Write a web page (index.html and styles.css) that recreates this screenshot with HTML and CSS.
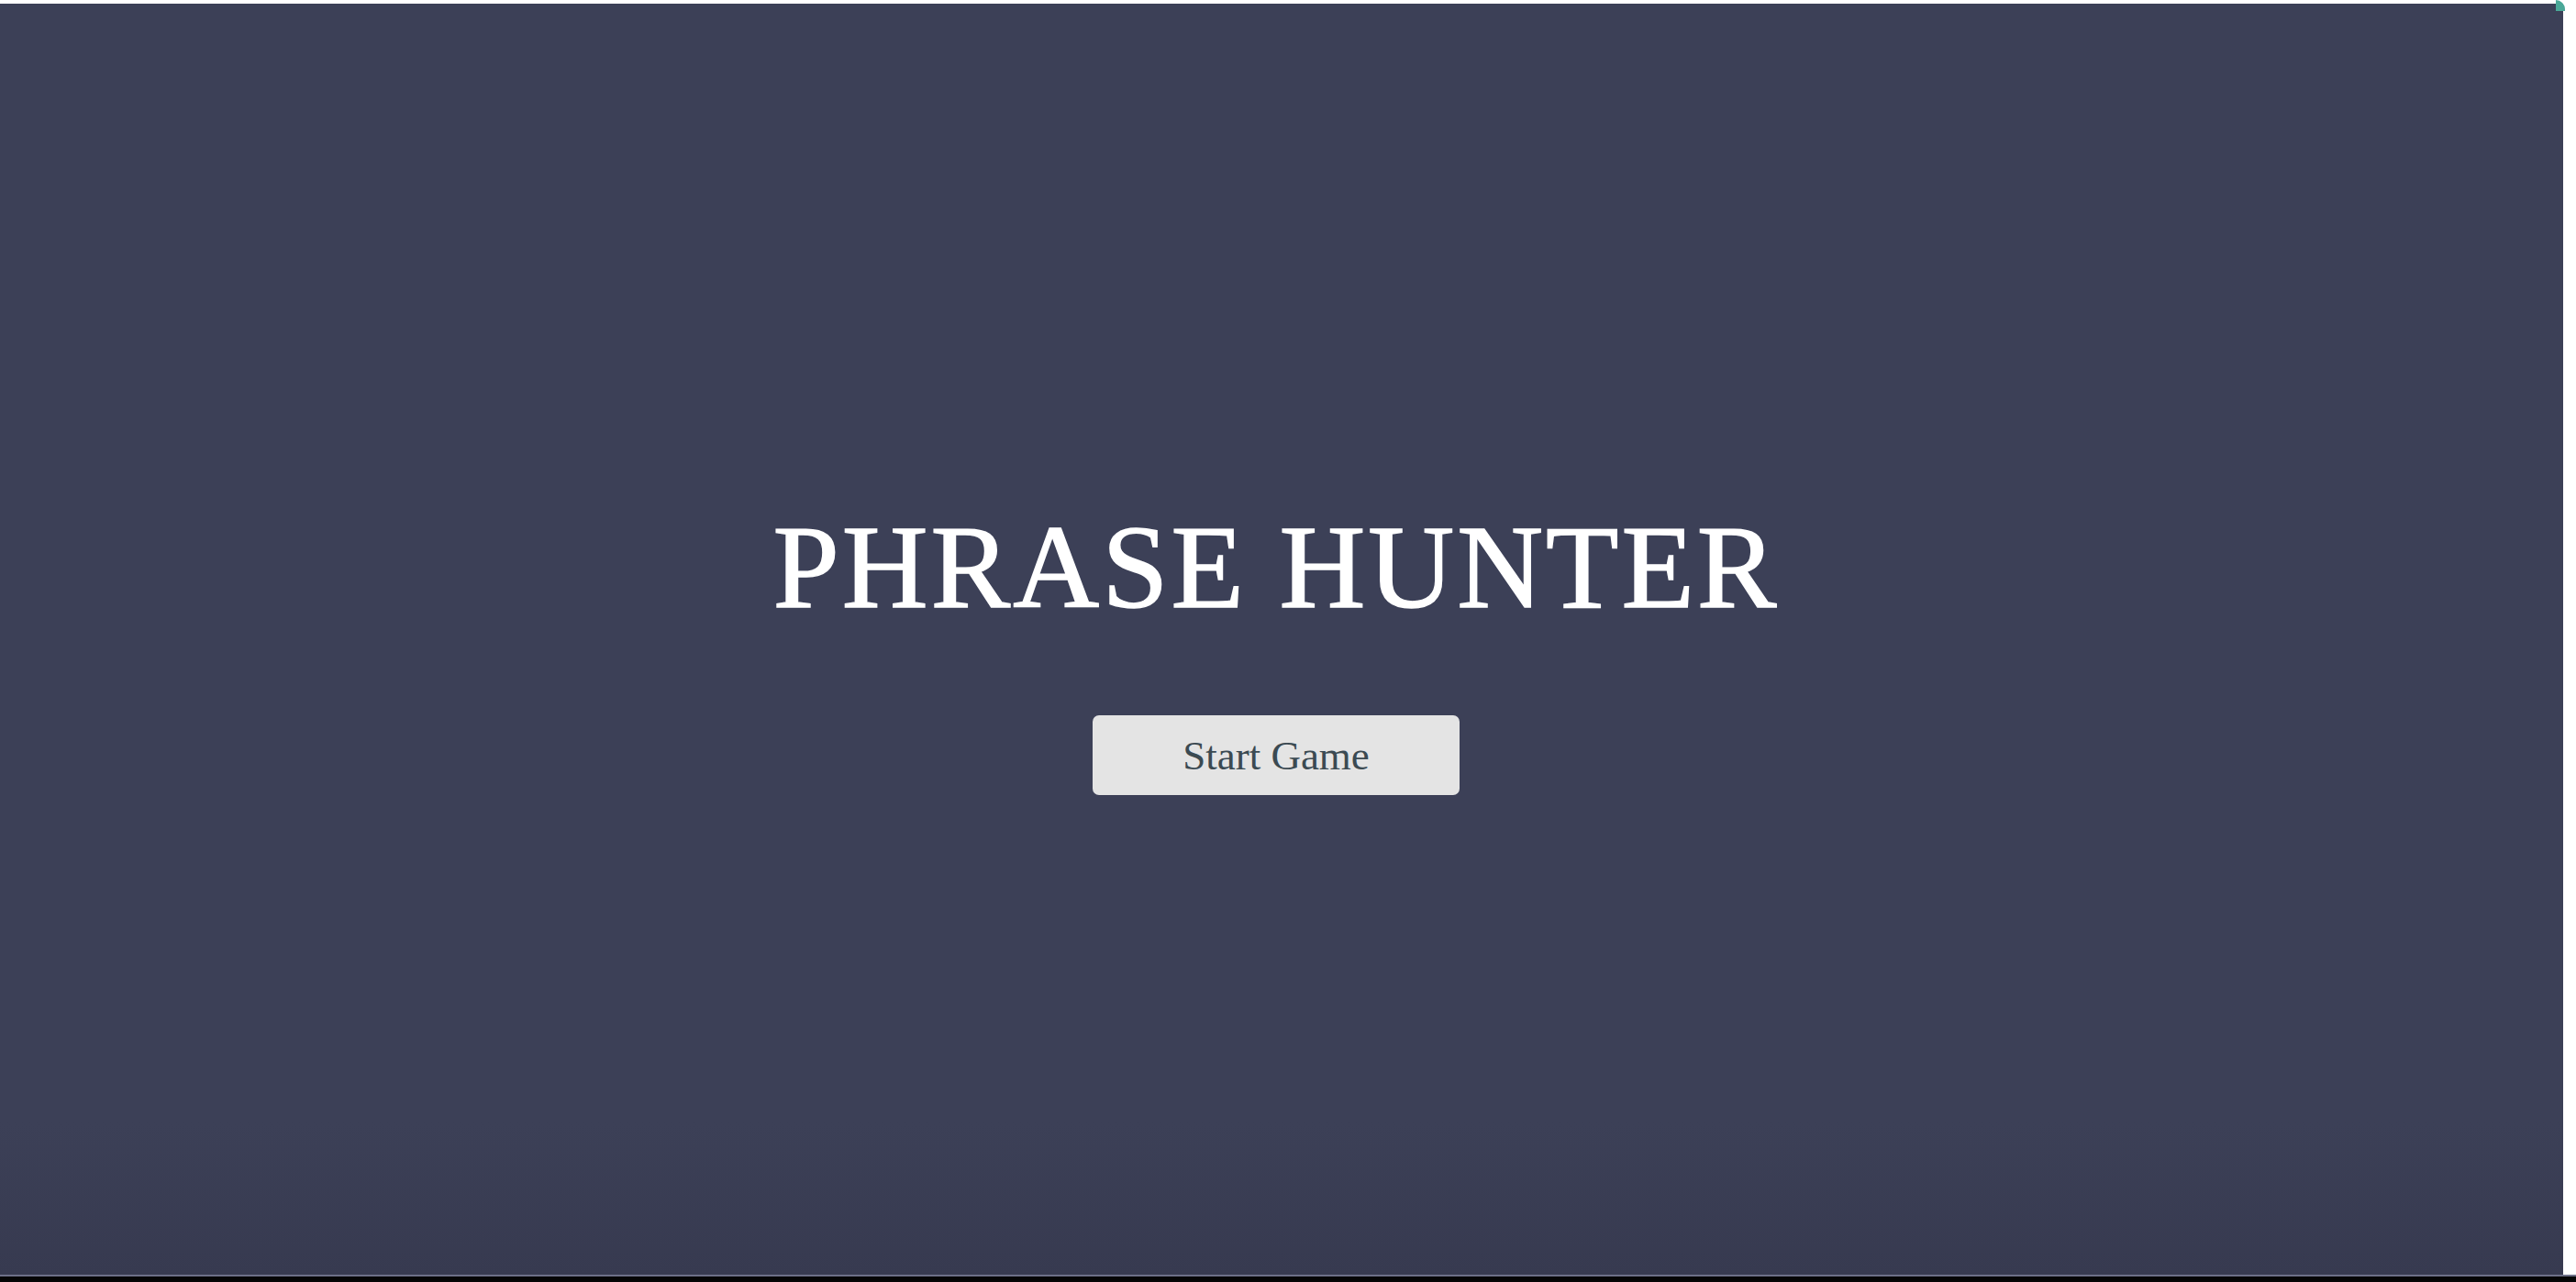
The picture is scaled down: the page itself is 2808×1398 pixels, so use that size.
FILE: index.html
```html
<!DOCTYPE html>
<html lang="en">
<head>
<meta charset="utf-8">
<title>Phrase Hunter</title>
<link rel="stylesheet" href="styles.css">
</head>
<body>
<div class="window">
  <div class="topbar"></div>
  <div class="row">
    <main class="overlay">
      <h1 class="title">PHRASE HUNTER</h1>
      <button class="start" type="button">Start Game</button>
    </main>
    <div class="edge"><span class="corner"></span></div>
  </div>
  <div class="bottomline"></div>
  <div class="bottombar"></div>
</div>
</body>
</html>
```
FILE: styles.css
```css
html, body {
  margin: 0;
  padding: 0;
  height: 100%;
  background: #ffffff;
  overflow: hidden;
}
.window {
  display: flex;
  flex-direction: column;
  height: 1398px;
  width: 2808px;
}
.topbar {
  height: 4px;
  background: #ffffff;
  flex: none;
}
.row {
  display: flex;
  flex: 1;
  min-height: 0;
}
.overlay {
  flex: 1;
  background: linear-gradient(to bottom, #3c4057 0%, #3c4057 88%, #373a50 100%);
  display: flex;
  flex-direction: column;
  align-items: center;
  justify-content: center;
  padding-top: 26px;
  padding-right: 12px;
  box-sizing: border-box;
}
.title {
  margin: 0;
  font-family: "Liberation Serif", "Times New Roman", serif;
  font-weight: 400;
  font-size: 130px;
  line-height: 1;
  letter-spacing: 3px;
  color: #ffffff;
  -webkit-text-stroke: 1.5px #ffffff;
}
.start {
  margin-top: 97px;
  width: 400px;
  height: 87px;
  border: none;
  border-radius: 7px;
  background: #e4e4e4;
  color: #3b4a52;
  font-family: "Liberation Serif", "Times New Roman", serif;
  font-size: 45px;
  padding: 0;
  display: flex;
  align-items: center;
  justify-content: center;
}
.edge {
  width: 14px;
  flex: none;
  background: #ffffff;
  position: relative;
}
.corner {
  position: absolute;
  left: -8px;
  top: -4px;
  width: 10px;
  height: 12px;
  background: #4aa898;
  border-top-right-radius: 10px;
}
.bottomline {
  height: 2px;
  background: #6d7088;
  flex: none;
}
.bottombar {
  height: 6px;
  background: #050505;
  flex: none;
}
```
